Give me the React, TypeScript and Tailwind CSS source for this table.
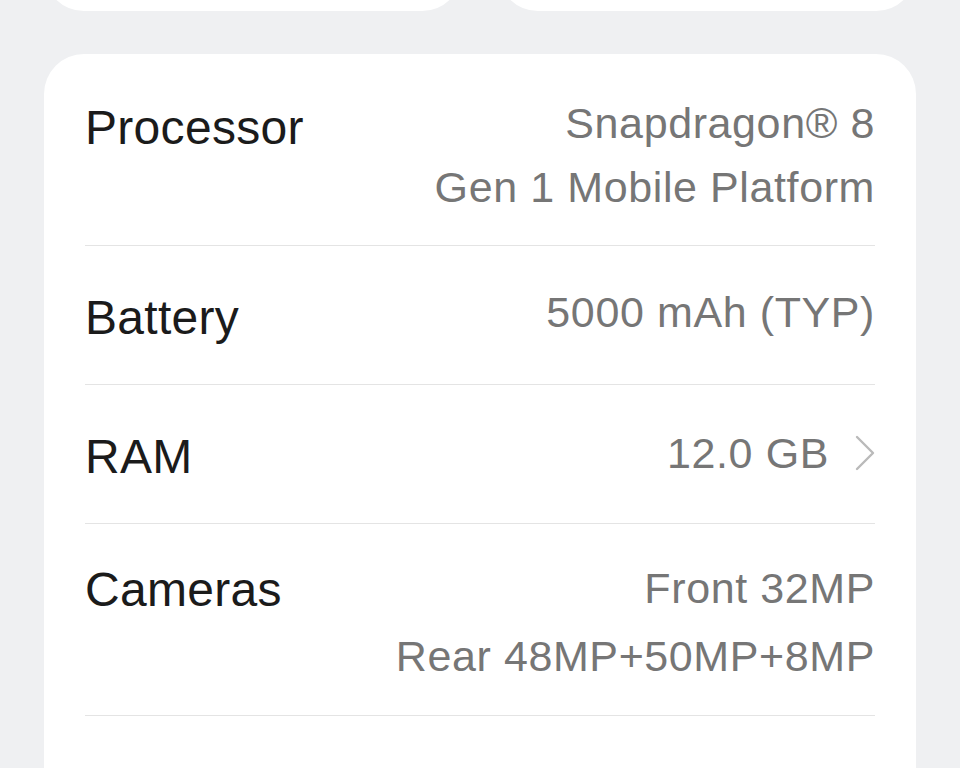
import type { ReactNode } from 'react';

type Spec = {
  label: string;
  lines: string[];
  rowClass: string;
  lineClass: string;
  labelClass: string;
  chevron?: boolean;
};

const specs: Spec[] = [
  {
    label: 'Processor',
    lines: ['Snapdragon® 8', 'Gen 1 Mobile Platform'],
    rowClass: 'h-[191px] pt-[37px]',
    lineClass: 'leading-[64px]',
    labelClass: 'mt-[5px]',
  },
  {
    label: 'Battery',
    lines: ['5000 mAh (TYP)'],
    rowClass: 'h-[138px] pt-[34px]',
    lineClass: 'leading-[64px]',
    labelClass: 'mt-[6px]',
  },
  {
    label: 'RAM',
    lines: ['12.0 GB'],
    rowClass: 'h-[138px] pt-[36px]',
    lineClass: 'leading-[64px]',
    labelClass: 'mt-[4px]',
    chevron: true,
  },
  {
    label: 'Cameras',
    lines: ['Front 32MP', 'Rear 48MP+50MP+8MP'],
    rowClass: 'h-[191px] pt-[30px]',
    lineClass: 'leading-[68px]',
    labelClass: 'mt-[4px]',
  },
];

function Chevron() {
  return (
    <svg width="20" height="36" viewBox="0 0 20 36" fill="none" className="ml-[26px] shrink-0">
      <path d="M2 2 L18 18 L2 34" stroke="#bababa" strokeWidth="2.4" strokeLinecap="round" strokeLinejoin="round" />
    </svg>
  );
}

function SpecRow({ spec }: { spec: Spec }): ReactNode {
  return (
    <div className={`flex items-start justify-between ${spec.rowClass}`}>
      <div className={`text-[48px] leading-[64px] tracking-[0.3px] text-[#1b1b1b] ${spec.labelClass}`}>
        {spec.label}
      </div>
      <div className="flex items-center">
        <div className="flex flex-col items-end text-[43px] tracking-[0.6px] text-[#767676]">
          {spec.lines.map((line) => (
            <div key={line} className={`whitespace-nowrap ${spec.lineClass}`}>
              {line}
            </div>
          ))}
        </div>
        {spec.chevron && <Chevron />}
      </div>
    </div>
  );
}

export default function App() {
  return (
    <div
      className="w-[960px] h-[768px] overflow-hidden bg-[#eff0f2] px-[44px]"
      style={{ fontFamily: '"Liberation Sans", Arial, sans-serif' }}
    >
      {/* cards above, scrolled mostly out of view */}
      <div className="grid grid-cols-2 gap-[36px] -mt-[109px]">
        <div className="h-[120px] rounded-[40px] bg-white" />
        <div className="h-[120px] rounded-[40px] bg-white" />
      </div>

      {/* specs card */}
      <div className="mt-[43px] rounded-[40px] bg-white px-[41px] pb-[120px]">
        {specs.map((spec, i) => (
          <div key={spec.label}>
            {i > 0 && <div className="h-px bg-[#e4e4e4]" />}
            <SpecRow spec={spec} />
          </div>
        ))}
        <div className="h-px bg-[#e4e4e4]" />
      </div>
    </div>
  );
}
